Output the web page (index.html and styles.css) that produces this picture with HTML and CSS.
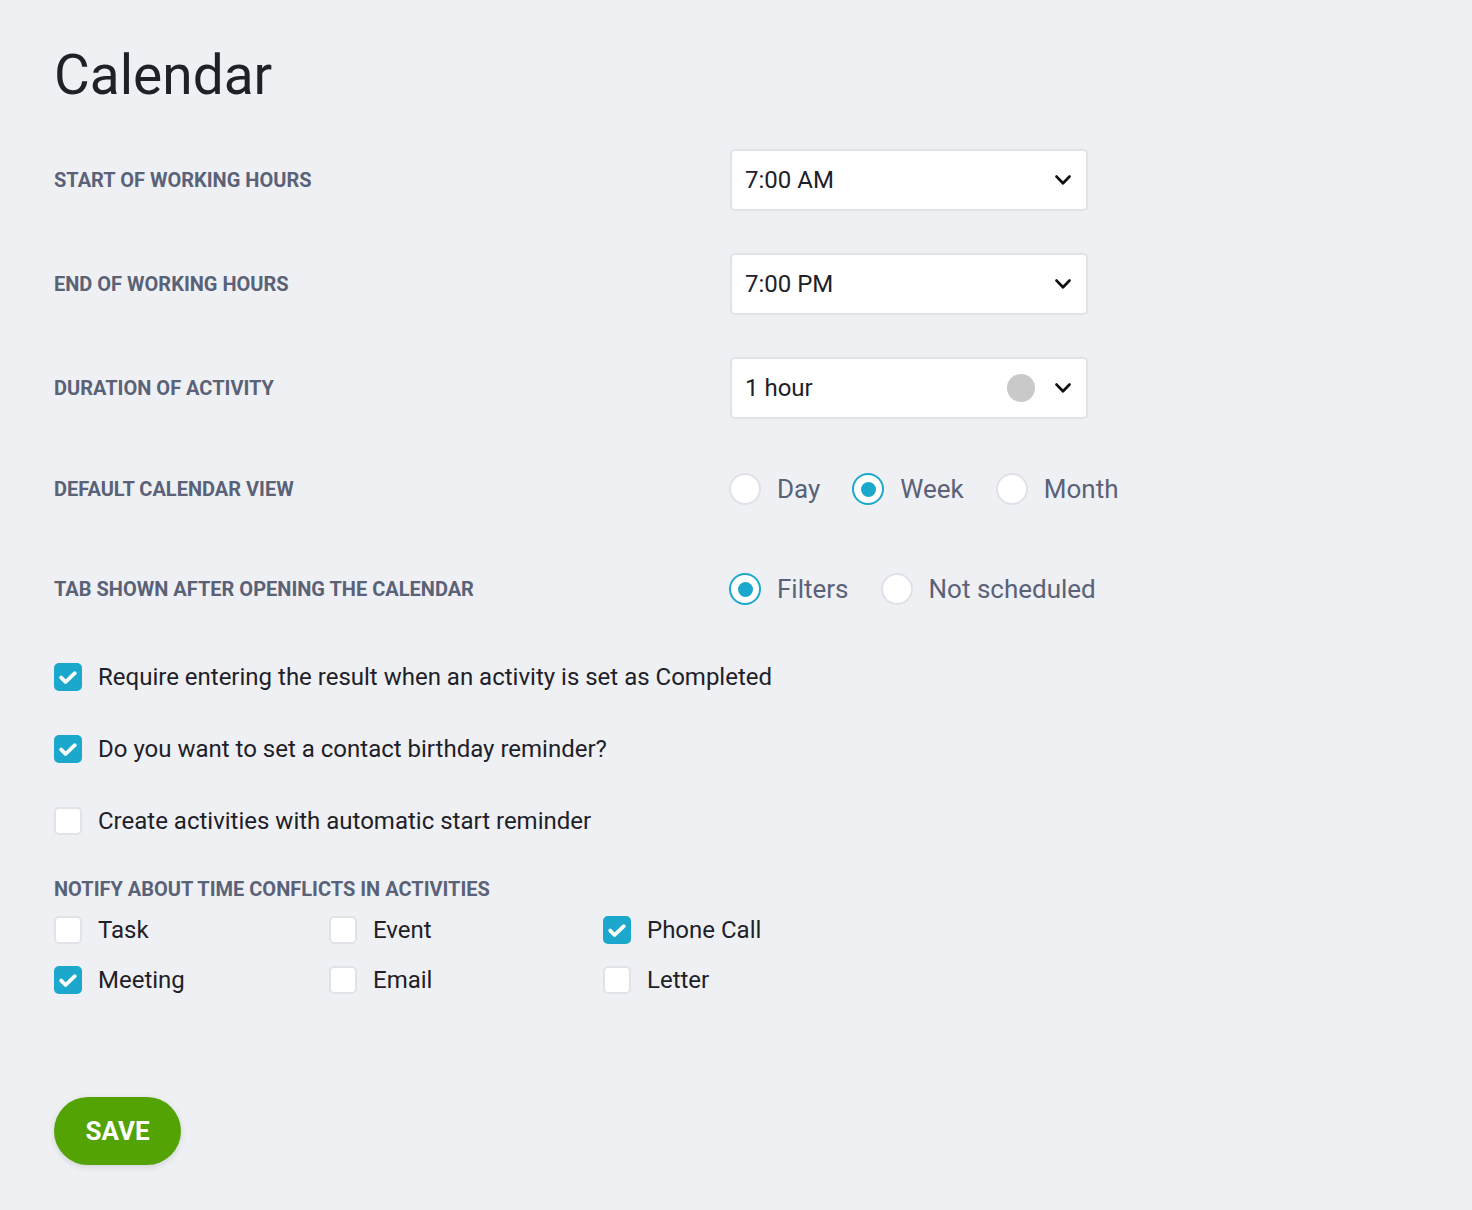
FILE: index.html
```html
<!DOCTYPE html>
<html lang="en">
<head>
<meta charset="utf-8">
<title>Calendar</title>
<link rel="stylesheet" href="styles.css">
</head>
<body>
<main class="page">
  <h1 class="title">Calendar</h1>

  <div class="row row-select">
    <div class="label">Start of working hours</div>
    <div class="select"><span class="select-value">7:00 AM</span><svg class="chev" viewBox="0 0 16 10" width="16" height="10"><path d="M1.6 1.6 L8 8.2 L14.4 1.6" fill="none" stroke="#111" stroke-width="2.8" stroke-linecap="round" stroke-linejoin="round"/></svg></div>
  </div>

  <div class="row row-select">
    <div class="label">End of working hours</div>
    <div class="select"><span class="select-value">7:00 PM</span><svg class="chev" viewBox="0 0 16 10" width="16" height="10"><path d="M1.6 1.6 L8 8.2 L14.4 1.6" fill="none" stroke="#111" stroke-width="2.8" stroke-linecap="round" stroke-linejoin="round"/></svg></div>
  </div>

  <div class="row row-select">
    <div class="label">Duration of activity</div>
    <div class="select"><span class="select-value">1 hour</span><span class="dot"></span><svg class="chev" viewBox="0 0 16 10" width="16" height="10"><path d="M1.6 1.6 L8 8.2 L14.4 1.6" fill="none" stroke="#111" stroke-width="2.8" stroke-linecap="round" stroke-linejoin="round"/></svg></div>
  </div>

  <div class="row row-radio row-view">
    <div class="label">Default calendar view</div>
    <div class="radios">
      <span class="radio-item"><span class="radio"></span><span class="radio-text">Day</span></span>
      <span class="radio-item"><span class="radio checked"></span><span class="radio-text">Week</span></span>
      <span class="radio-item"><span class="radio"></span><span class="radio-text">Month</span></span>
    </div>
  </div>

  <div class="row row-radio row-tab">
    <div class="label">Tab shown after opening the calendar</div>
    <div class="radios">
      <span class="radio-item"><span class="radio checked"></span><span class="radio-text">Filters</span></span>
      <span class="radio-item"><span class="radio"></span><span class="radio-text">Not scheduled</span></span>
    </div>
  </div>

  <div class="checks">
    <div class="check-item"><span class="box checked"><svg viewBox="0 0 28 28" width="28" height="28"><path d="M7.2 14.6 L11.6 19 L20.8 10.2" fill="none" stroke="#fff" stroke-width="3.8" stroke-linecap="round" stroke-linejoin="round"/></svg></span><span class="check-text">Require entering the result when an activity is set as Completed</span></div>
    <div class="check-item"><span class="box checked"><svg viewBox="0 0 28 28" width="28" height="28"><path d="M7.2 14.6 L11.6 19 L20.8 10.2" fill="none" stroke="#fff" stroke-width="3.8" stroke-linecap="round" stroke-linejoin="round"/></svg></span><span class="check-text">Do you want to set a contact birthday reminder?</span></div>
    <div class="check-item"><span class="box"></span><span class="check-text">Create activities with automatic start reminder</span></div>
  </div>

  <div class="label notify-label">Notify about time conflicts in activities</div>
  <div class="notify-grid">
    <div class="check-item"><span class="box"></span><span class="check-text">Task</span></div>
    <div class="check-item"><span class="box"></span><span class="check-text">Event</span></div>
    <div class="check-item"><span class="box checked"><svg viewBox="0 0 28 28" width="28" height="28"><path d="M7.2 14.6 L11.6 19 L20.8 10.2" fill="none" stroke="#fff" stroke-width="3.8" stroke-linecap="round" stroke-linejoin="round"/></svg></span><span class="check-text">Phone Call</span></div>
    <div class="check-item"><span class="box checked"><svg viewBox="0 0 28 28" width="28" height="28"><path d="M7.2 14.6 L11.6 19 L20.8 10.2" fill="none" stroke="#fff" stroke-width="3.8" stroke-linecap="round" stroke-linejoin="round"/></svg></span><span class="check-text">Meeting</span></div>
    <div class="check-item"><span class="box"></span><span class="check-text">Email</span></div>
    <div class="check-item"><span class="box"></span><span class="check-text">Letter</span></div>
  </div>

  <button class="save" type="button">SAVE</button>
</main>
</body>
</html>
```

FILE: styles.css
```css
* { box-sizing: border-box; }

html, body {
  margin: 0;
  padding: 0;
  background: #eff0f4;
  font-family: Roboto, "Liberation Sans", Arial, sans-serif;
  color: #1e2128;
}

.page {
  padding: 41px 0 40px 54px;
}

.title {
  margin: 0 0 40px 0;
  font-size: 55px;
  line-height: 68px;
  height: 68px;
  font-weight: 400;
  color: #1e2128;
}

.row {
  display: grid;
  grid-template-columns: 676px 358px;
  align-items: center;
}

.row-select {
  height: 62px;
  margin-bottom: 42px;
}

.row-radio {
  height: 62px;
}

.row-view { margin-top: -3px; margin-bottom: 38px; }
.row-tab { margin-bottom: 43px; }

.label {
  font-size: 20px;
  font-weight: 700;
  text-transform: uppercase;
  color: #5a6277;
  letter-spacing: 0;
}

.select {
  display: flex;
  align-items: center;
  height: 62px;
  width: 358px;
  background: #fff;
  border: 2px solid #e1e3e9;
  border-radius: 5px;
  padding: 0 15px 0 13px;
}

.select-value {
  flex: 1;
  font-size: 24px;
  color: #1e2128;
}

.dot {
  width: 28px;
  height: 28px;
  border-radius: 50%;
  background: #c9c9c9;
  margin-right: 20px;
}

.chev { display: block; }

.radios {
  display: flex;
  align-items: center;
  white-space: nowrap;
  margin-left: -1px;
}

.radio-item {
  display: flex;
  align-items: center;
  margin-right: 32px;
}

.radio {
  width: 32px;
  height: 32px;
  border-radius: 50%;
  background: #fff;
  border: 2px solid #dfe1e7;
  margin-right: 16px;
  position: relative;
  flex: none;
}

.radio.checked {
  border: 2.5px solid #1ba8cc;
}

.radio.checked::after {
  content: "";
  position: absolute;
  left: 50%;
  top: 50%;
  width: 15px;
  height: 15px;
  margin: -7.5px 0 0 -7.5px;
  border-radius: 50%;
  background: #1ba8cc;
}

.radio-text {
  font-size: 26px;
  color: #5a6277;
}

.checks {
  display: flex;
  flex-direction: column;
  gap: 44px;
  margin-bottom: 42px;
}

.check-item {
  display: flex;
  align-items: center;
  height: 28px;
  white-space: nowrap;
}

.box {
  width: 28px;
  height: 28px;
  border-radius: 5px;
  background: #fff;
  border: 2px solid #e1e3e9;
  margin-right: 16px;
  flex: none;
  display: flex;
}

.box.checked {
  background: #1ba8cc;
  border: none;
}

.box svg { display: block; }

.check-text {
  font-size: 24px;
  color: #1e2128;
}

.notify-label {
  line-height: 24px;
  margin-bottom: 15px;
}

.notify-grid {
  display: grid;
  grid-template-columns: 275px 274px 300px;
  row-gap: 22px;
  margin-bottom: 103px;
}

.save {
  display: block;
  width: 127px;
  height: 68px;
  border: none;
  border-radius: 34px;
  background: #52a303;
  color: #fff;
  font-family: Roboto, "Liberation Sans", Arial, sans-serif;
  font-size: 26px;
  font-weight: 700;
  padding: 0;
  box-shadow: 0 2px 6px rgba(0, 0, 0, 0.12);
  cursor: pointer;
}
```
